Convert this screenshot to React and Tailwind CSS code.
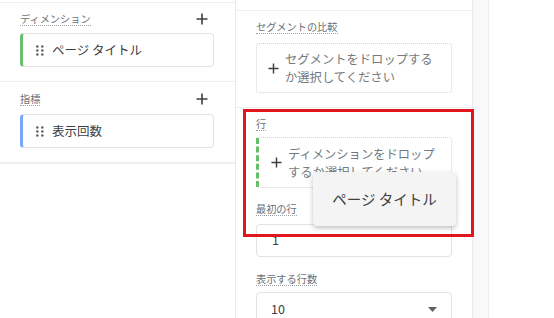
import React from "react";

const font = { fontFamily: '"Noto Sans CJK JP", "Noto Sans", sans-serif' };

function Plus({ size = 12, color = "#3c4043", className = "" }) {
  return (
    <svg width={size} height={size} viewBox="0 0 12 12" className={className}>
      <path d="M6 0.5V11.5M0.5 6H11.5" stroke={color} strokeWidth="1.6" fill="none" />
    </svg>
  );
}

function Drag() {
  return (
    <svg width="8" height="11" viewBox="0 0 8 11">
      {[0, 1].map((c) =>
        [0, 1, 2].map((r) => (
          <circle key={c + "-" + r} cx={1.3 + c * 5} cy={1.5 + r * 4} r="1.3" fill="#5f6368" />
        ))
      )}
    </svg>
  );
}

function Label({ children, className = "" }) {
  return (
    <div className={"flex shrink-0 " + className}>
      <span className="text-[10.2px] leading-[13px] text-[#6b6f73] border-b border-dotted border-[#9aa0a6]">
        {children}
      </span>
    </div>
  );
}

function Chip({ color, children }) {
  return (
    <div
      className="h-[34px] rounded-[4px] border border-[#e3e4e6] border-l-[3px] flex items-center pl-[13px] gap-[8px]"
      style={{ borderLeftColor: color }}
    >
      <Drag />
      <span className="text-[12.5px] text-[#3c4043]">{children}</span>
    </div>
  );
}

export default function App() {
  return (
    <div className="relative w-[554px] h-[318px] overflow-hidden bg-white flex" style={font}>
      {/* Left panel */}
      <div className="w-[236px] h-full border-r border-[#e8eaed] flex flex-col shrink-0">
        <div className="h-[2px] shrink-0" />
        <div className="h-[79px] shrink-0 border-t border-[#eceef0] px-[20px]">
          <div className="mt-[6px] h-[20px] flex items-center justify-between">
            <Label>ディメンション</Label>
            <Plus className="mr-[7px]" />
          </div>
          <div className="mt-[4px] pr-[1px]">
            <Chip color="#66bf6c">ページ タイトル</Chip>
          </div>
        </div>
        <div className="h-[81px] shrink-0 border-t border-[#eceef0] px-[20px]">
          <div className="mt-[7px] h-[20px] flex items-center justify-between">
            <Label>指標</Label>
            <Plus className="mr-[7px]" />
          </div>
          <div className="mt-[5px] pr-[1px]">
            <Chip color="#7aa7f5">表示回数</Chip>
          </div>
        </div>
        <div className="border-t-2 border-[#eceef0]" />
      </div>

      {/* Right settings column */}
      <div className="w-[237px] h-full border-r border-[#e8eaed] flex flex-col shrink-0 overflow-hidden">
        <div className="h-[10px] shrink-0" />
        <div className="h-[97px] shrink-0 border-t border-[#eceef0] px-[20px]">
          <Label className="mt-[9px]">セグメントの比較</Label>
          <div className="mt-[9px] h-[50px] border border-dotted border-[#d2d4d7] rounded-[3px] flex items-center pl-[11px] gap-[6px]">
            <Plus size={11} />
            <div className="text-[12.3px] leading-[18px] text-[#75787c]">
              セグメントをドロップする
              <br />
              か選択してください
            </div>
          </div>
        </div>
        <div className="shrink-0 border-t border-[#eceef0] px-[20px] pb-[20px]">
          <Label className="mt-[9px]">行</Label>
          <div className="mt-[6px] h-[51px] border border-dotted border-[#d2d4d7] border-l-0 rounded-[3px] flex items-center">
            <div className="h-full border-l-[3px] border-dashed border-[#66bf6c]" />
            <div className="flex items-center pl-[12px] gap-[6px]">
              <Plus size={11} />
              <div className="text-[12.3px] leading-[18px] text-[#75787c]">
                ディメンションをドロップ
                <br />
                するか選択してください
              </div>
            </div>
          </div>
          <Label className="mt-[14px]">最初の行</Label>
          <div className="mt-[8px] h-[33px] border border-[#e0e2e5] rounded-[4px] flex items-center pl-[15px]">
            <span className="text-[12.5px] text-[#3c4043]">1</span>
          </div>
          <Label className="mt-[15px]">表示する行数</Label>
          <div className="mt-[6px] h-[34px] border border-[#e0e2e5] rounded-[4px] flex items-center justify-between pl-[14px] pr-[14px]">
            <span className="text-[12.5px] text-[#3c4043]">10</span>
            <svg width="9" height="5" viewBox="0 0 9 5">
              <path d="M0 0H9L4.5 5Z" fill="#5f6368" />
            </svg>
          </div>
        </div>
      </div>

      {/* Gray strip */}
      <div className="w-[16px] h-full bg-[#f8f9fa] border-r border-[#eceef0] shrink-0" />
      <div className="flex-1" />

      {/* Dragged item popup */}
      <div className="absolute left-[313px] top-[172px] w-[143px] h-[54px] rounded-[4px] bg-[#f4f4f4] shadow-[0_2px_5px_rgba(0,0,0,0.25)] flex items-center justify-center">
        <span className="text-[14.5px] text-[#3c4043]">ページ タイトル</span>
      </div>

      {/* Red highlight */}
      <div className="absolute left-[243px] top-[109px] w-[231px] h-[128px] border-[3px] border-[#e3151c]" />
    </div>
  );
}
